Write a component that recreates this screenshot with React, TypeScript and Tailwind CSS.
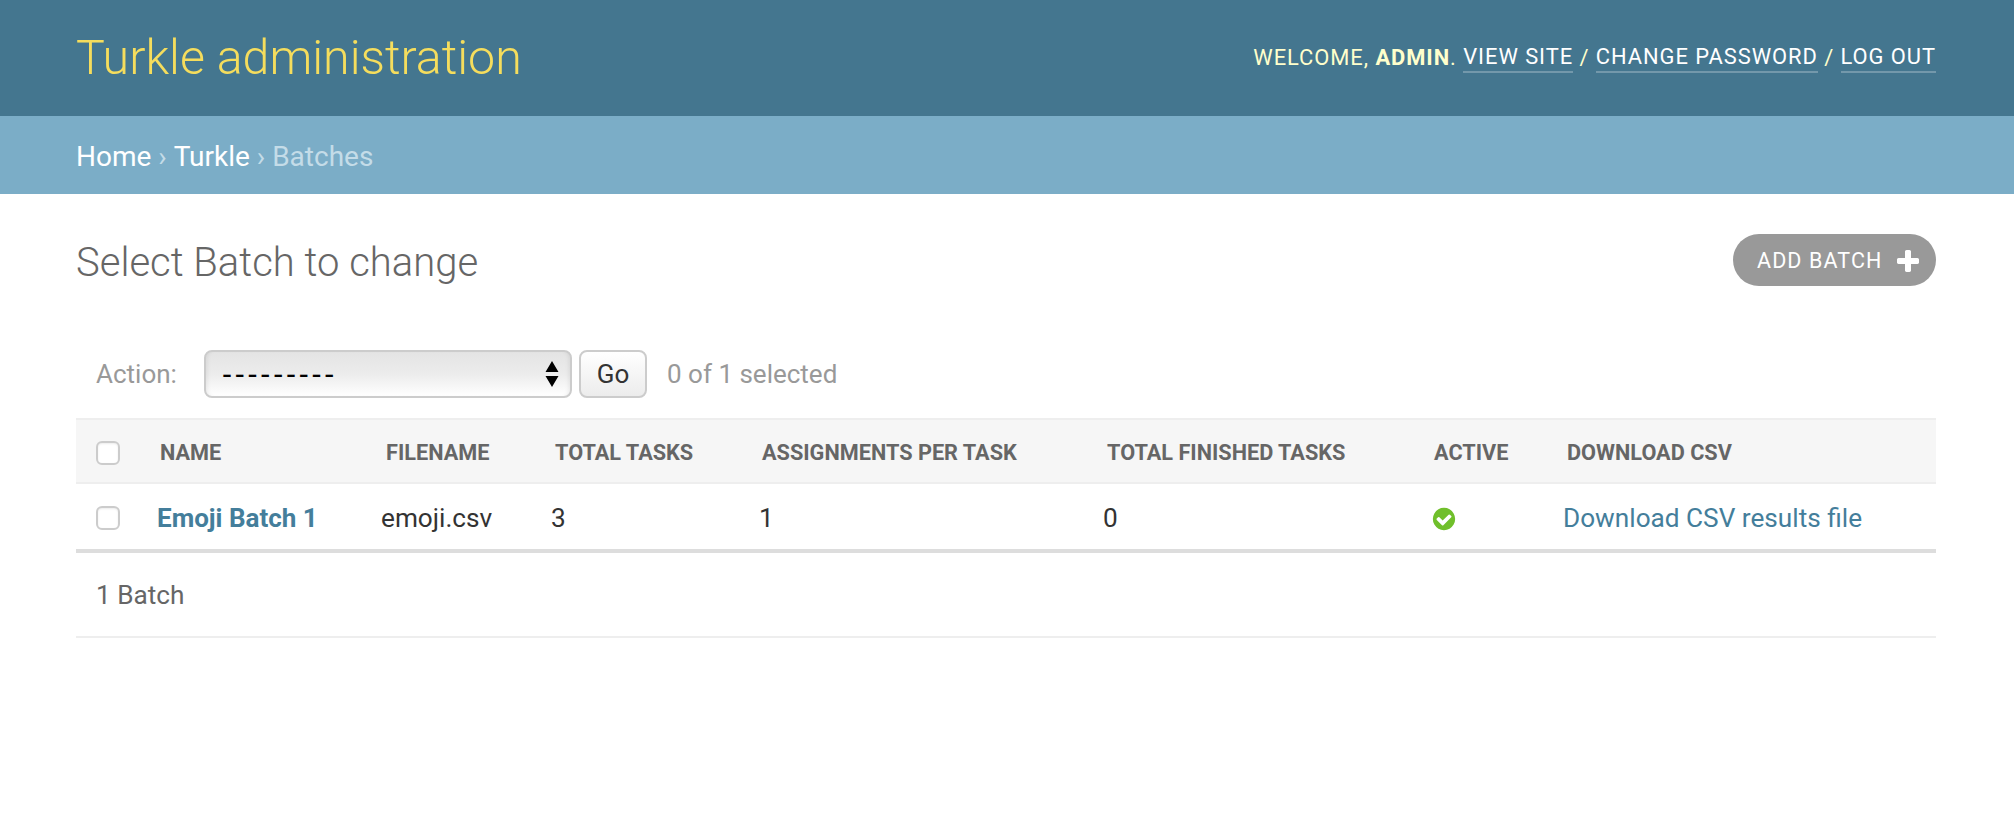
const columns = [
  { label: 'NAME', width: 'w-[226px]' },
  { label: 'FILENAME', width: 'w-[169px]' },
  { label: 'TOTAL TASKS', width: 'w-[207px]' },
  { label: 'ASSIGNMENTS PER TASK', width: 'w-[345px]' },
  { label: 'TOTAL FINISHED TASKS', width: 'w-[327px]' },
  { label: 'ACTIVE', width: 'w-[133px]' },
  { label: 'DOWNLOAD CSV', width: 'w-[389px]' },
];

function Checkbox() {
  return <div className="w-6 h-6 rounded-[6px] border-2 border-[#ccc] bg-white shadow-[inset_0_1px_2px_rgba(0,0,0,0.08)]" />;
}

export default function App() {
  return (
    <div className="min-h-[822px] bg-white font-['Roboto',sans-serif] text-[#333]">
      {/* HEADER */}
      <div className="h-[116px] bg-[#44768f] px-[76px] pr-[78px] flex items-center justify-between">
        <h1 className="text-[48.3px] font-light leading-none text-[#f5dd5d]">Turkle administration</h1>
        <div className="text-[21.9px] tracking-[0.95px] text-[#ffc] leading-[28px] flex items-center whitespace-pre">
          <span>WELCOME, </span>
          <strong className="font-bold">ADMIN</strong>
          <span>. </span>
          <a className="text-white border-b-2 border-white/25">VIEW SITE</a>
          <span> / </span>
          <a className="text-white border-b-2 border-white/25">CHANGE PASSWORD</a>
          <span> / </span>
          <a className="text-white border-b-2 border-white/25">LOG OUT</a>
        </div>
      </div>

      {/* BREADCRUMBS */}
      <div className="h-[78px] bg-[#7badc7] px-[76px] pt-[4px] flex items-center text-[28px] text-[#c4dce8] whitespace-pre">
        <a className="text-white">Home</a>
        <span> › </span>
        <a className="text-white">Turkle</a>
        <span> › Batches</span>
      </div>

      <div className="px-[76px] pr-[78px]">
        {/* TITLE */}
        <div className="flex justify-between items-start pt-[40px]">
          <h2 className="text-[40px] font-light leading-[58px] text-[#666]">Select Batch to change</h2>
          <a className="h-[52px] w-[203px] rounded-[26px] bg-[#999] text-white text-[21.5px] tracking-[1.1px] flex items-center justify-between pl-[24px] pr-[14px] pt-[2px]">
            ADD BATCH
            <svg viewBox="0 0 1792 1792" className="w-[28px] h-[28px] fill-white">
              <path d="M1600 796v192q0 40-28 68t-68 28h-416v416q0 40-28 68t-68 28h-192q-40 0-68-28t-28-68v-416h-416q-40 0-68-28t-28-68v-192q0-40 28-68t68-28h416v-416q0-40 28-68t68-28h192q40 0 68 28t28 68v416h416q40 0 68 28t28 68z" />
            </svg>
          </a>
        </div>

        {/* ACTIONS */}
        <div className="flex items-center h-[48px] mt-[58px] text-[26px] text-[#999]">
          <span className="ml-[20px] w-[108px]">Action:</span>
          <div className="w-[368px] h-[48px] rounded-[8px] border-2 border-[#ccc] bg-gradient-to-b from-[#e4e4e4] via-[#ececec] to-white flex items-center justify-between pl-[16px] pr-[11px] shadow-[inset_4px_0_4px_-3px_rgba(0,0,0,0.08),inset_-4px_0_4px_-3px_rgba(0,0,0,0.08)]">
            <span className="font-['Liberation_Sans',sans-serif] text-[30px] leading-none text-black tracking-[2.8px]">---------</span>
            <svg viewBox="0 0 14 28" className="w-[14px] h-[28px] fill-black">
              <path d="M7 1l6.500 11H.5zM7 27L.5 16h13z" />
            </svg>
          </div>
          <div className="ml-[7px] w-[68px] h-[48px] rounded-[8px] border-2 border-[#ccc] bg-gradient-to-b from-white to-[#ececec] flex items-center justify-center text-[26px] text-[#333]">Go</div>
          <span className="ml-[20px]">0 of 1 selected</span>
        </div>

        {/* TABLE */}
        <table className="mt-[20px] w-full table-fixed border-collapse">
          <thead>
            <tr className="h-[64px] bg-[#f6f6f6] border-y-2 border-[#eee]">
              <th className="w-[64px] pl-[20px] pt-[3px]">
                <Checkbox />
              </th>
              {columns.map((col) => (
                <th key={col.label} className={`${col.width} pl-[20px] pt-[5px] text-left text-[21.7px] font-bold text-[#666]`}>
                  {col.label}
                </th>
              ))}
            </tr>
          </thead>
          <tbody>
            <tr className="h-[68px] border-b-4 border-[#ddd] text-[26.2px]">
              <td className="pl-[20px] pt-[3px]">
                <Checkbox />
              </td>
              <td className="pl-[17px] pt-[5px]">
                <a className="font-bold text-[26px] text-[#447e9b]">Emoji Batch 1</a>
              </td>
              <td className="pl-[15px] pt-[5px]">emoji.csv</td>
              <td className="pl-[16px] pt-[5px]">3</td>
              <td className="pl-[17px] pt-[5px]">1</td>
              <td className="pl-[16px] pt-[5px]">0</td>
              <td className="pl-[17px] pt-[4px]">
                <svg viewBox="0 0 1792 1792" className="w-[26px] h-[26px] fill-[#70bf2b]">
                  <path d="M1412 734q0-28-18-46l-91-90q-19-19-45-19t-45 19l-408 407-226-226q-19-19-45-19t-45 19l-91 90q-18 18-18 46 0 27 18 45l362 362q19 19 45 19 27 0 46-19l543-543q18-18 18-45zm252 162q0 209-103 385.500t-279.500 279.500-385.500 103-385.500-103-279.500-279.500-103-385.500 103-385.500 279.500-279.500 385.500-103 385.500 103 279.500 279.500 103 385.500z" />
                </svg>
              </td>
              <td className="pl-[16px] pt-[5px]">
                <a className="text-[#447e9b]">Download CSV results file</a>
              </td>
            </tr>
          </tbody>
        </table>

        {/* PAGINATOR */}
        <div className="h-[85px] border-b-2 border-[#eee] pl-[20px] pt-[2px] flex items-center text-[26.2px] text-[#666]">1 Batch</div>
      </div>
    </div>
  );
}
